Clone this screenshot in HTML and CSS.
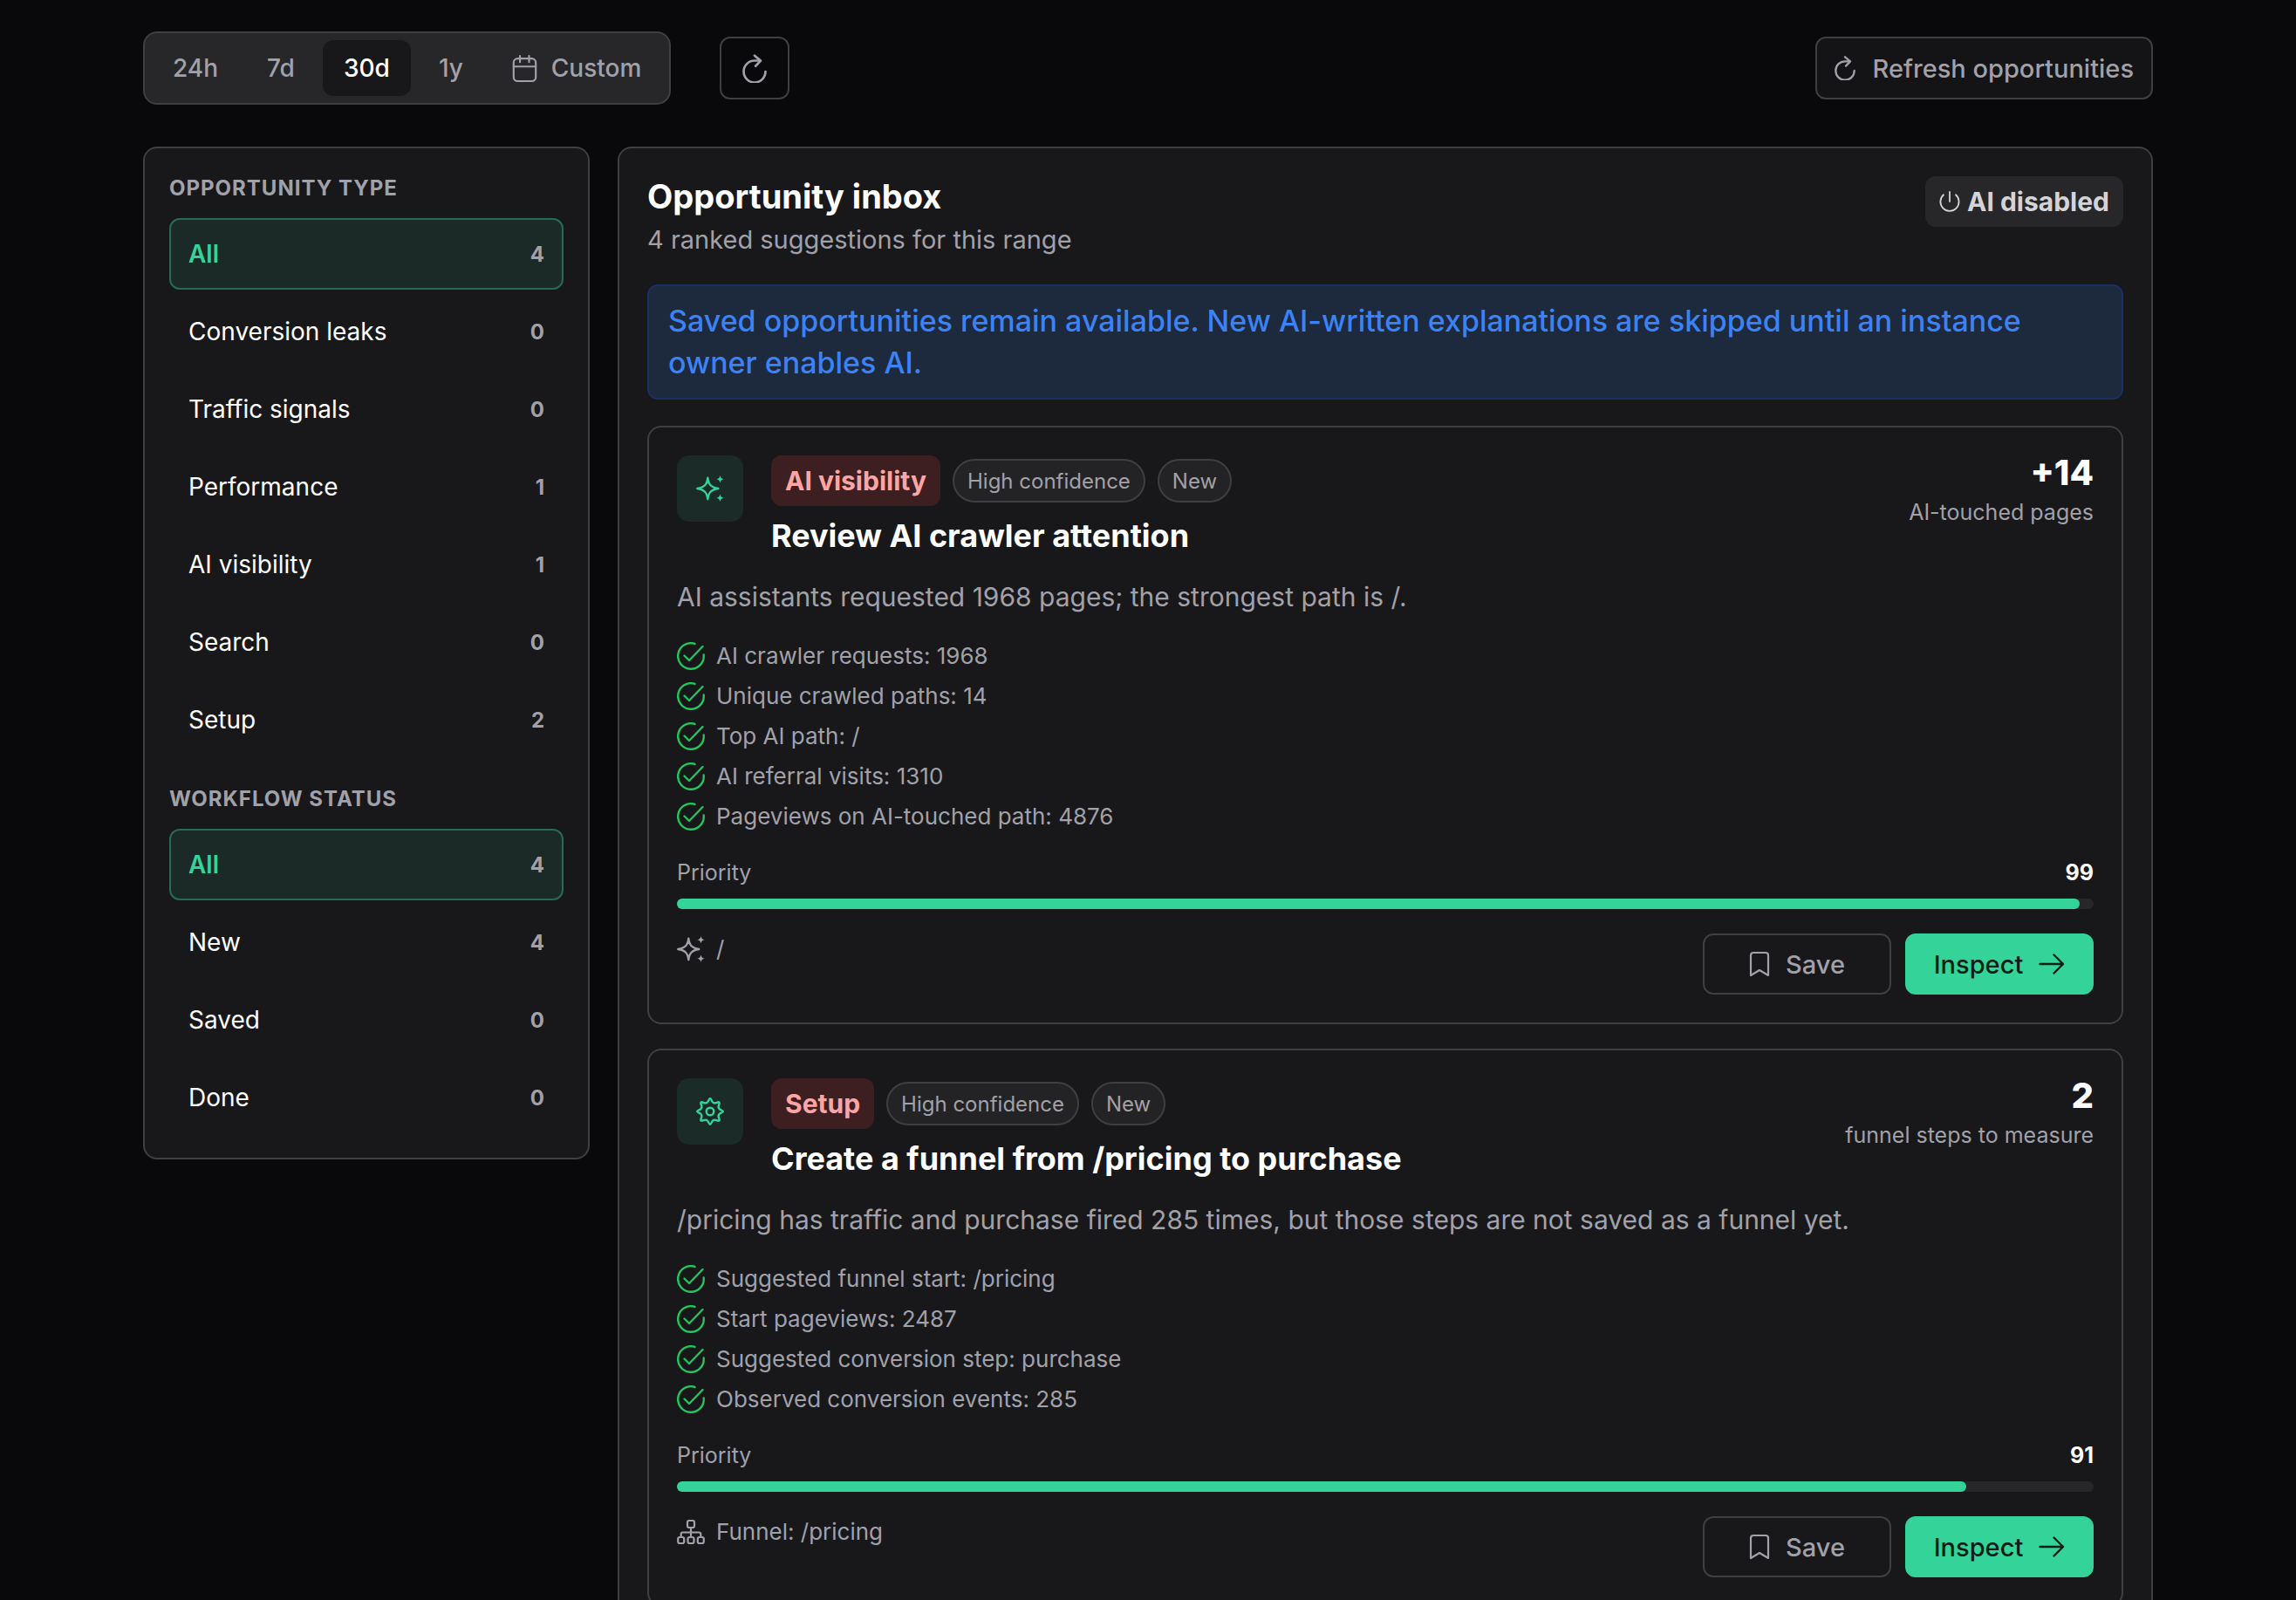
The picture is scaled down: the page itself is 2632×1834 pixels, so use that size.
FILE: index.html
```html
<!DOCTYPE html>
<html lang="en">
<head>
    <meta charset="UTF-8">
    <meta name="viewport" content="width=device-width, initial-scale=1.0">
    <title>Opportunities</title>
    <link rel="stylesheet" href="styles.css">
</head>
<body>
    <svg class="sprite" aria-hidden="true">
        <symbol id="icon-calendar" viewBox="0 0 32 36">
            <g fill="none" stroke="currentColor" stroke-width="2.4" stroke-linecap="round" stroke-linejoin="round">
                <rect x="2" y="5.500" width="28" height="28.500" rx="5"/>
                <path d="M2 15.500h28M10 2v8M21.500 2v8"/>
            </g>
        </symbol>
        <symbol id="icon-refresh" viewBox="0 0 24 28">
            <g fill="none" stroke="currentColor" stroke-width="2.3" stroke-linecap="round" stroke-linejoin="round">
                <path d="M22.700 17A10.700 10.700 0 1 1 12 6.300h5.500"/>
                <path d="M12 1.300L18 6.400l-5 5.200"/>
            </g>
        </symbol>
        <symbol id="icon-power" viewBox="0 0 24 24">
            <g fill="none" stroke="currentColor" stroke-width="1.8" stroke-linecap="round">
                <path d="M12 1v11"/>
                <path d="M5 4.3a10.6 10.6 0 1 0 14 0"/>
            </g>
        </symbol>
        <symbol id="icon-sparkles" viewBox="0 0 32 32">
            <path fill="none" stroke="currentColor" stroke-width="2.4" stroke-linejoin="round" d="M13.300 3.800c1 7.700 3.700 10.800 12 12.200-8.300 1.400-11 4.500-12 12.200-1-7.700-3.700-10.800-12-12.200 8.300-1.400 11-4.500 12-12.200z"/>
            <path fill="currentColor" d="M27.500 1c.6 2.700 1.600 3.700 4.300 4.300-2.700.6-3.700 1.600-4.300 4.300-.6-2.700-1.600-3.700-4.300-4.300 2.700-.6 3.700-1.600 4.300-4.300zM27.500 22.400c.6 2.700 1.600 3.700 4.300 4.300-2.700.6-3.700 1.600-4.300 4.300-.6-2.700-1.600-3.700-4.300-4.300 2.700-.6 3.700-1.600 4.300-4.300z"/>
        </symbol>
        <symbol id="icon-check" viewBox="0 0 32 32">
            <g fill="none" stroke="currentColor" stroke-width="2.400" stroke-linecap="round" stroke-linejoin="round">
                <path d="M30.700 14.500A14.800 14.800 0 1 1 20.500 1.900"/>
                <path d="M8.500 15.500l5.500 5.500L29.500 5"/>
            </g>
        </symbol>
        <symbol id="icon-gear" viewBox="0 0 32 32">
            <g fill="none" stroke="currentColor" stroke-width="2.400">
                <circle cx="16" cy="16" r="4.300"/>
                <path d="M28.660 17.720Q24.310 19.440 26.170 23.730T23.730 26.170T17.720 28.660T14.280 28.660T8.270 26.170T5.830 23.730T3.340 17.720T3.340 14.280T5.830 8.270T8.270 5.830T14.280 3.340T17.720 3.340T23.730 5.830T26.170 8.270T28.660 14.280T28.660 17.720z"/>
            </g>
        </symbol>
        <symbol id="icon-diagram" viewBox="0 0 32 32">
            <g fill="none" stroke="currentColor" stroke-width="2.2">
                <rect x="12" y="3" width="8" height="8" rx="2"/>
                <rect x="1.200" y="22" width="7" height="7" rx="2"/>
                <rect x="12.500" y="22" width="7" height="7" rx="2"/>
                <rect x="23.800" y="22" width="7" height="7" rx="2"/>
                <path d="M16 11v11M4.700 22v-3.500a2 2 0 0 1 2-2h18.600a2 2 0 0 1 2 2V22"/>
            </g>
        </symbol>
        <symbol id="icon-bookmark" viewBox="0 0 24 30">
            <path fill="none" stroke="currentColor" stroke-width="2.200" stroke-linejoin="round" d="M2 28V5a3 3 0 0 1 3-3h14a3 3 0 0 1 3 3v23l-10-6z"/>
        </symbol>
        <symbol id="icon-arrow" viewBox="0 0 30 26">
            <path fill="none" stroke="currentColor" stroke-width="2.400" stroke-linecap="round" stroke-linejoin="round" d="M1.500 13h26M17.500 2.500L28 13 17.500 23.500"/>
        </symbol>
    </svg>

    <div class="page">
        <header class="toolbar">
            <div class="range" role="group" aria-label="Date range">
                <button class="range-button">24h</button>
                <button class="range-button">7d</button>
                <button class="range-button active">30d</button>
                <button class="range-button">1y</button>
                <button class="range-button"><svg class="icon-calendar"><use href="#icon-calendar"/></svg>Custom</button>
            </div>
            <button class="reload-button" aria-label="Reload"><svg class="icon-reload"><use href="#icon-refresh"/></svg></button>
            <button class="refresh-button"><svg class="icon-refresh"><use href="#icon-refresh"/></svg>Refresh opportunities</button>
        </header>

        <div class="layout">
            <aside class="panel sidebar">
                <section class="filter">
                    <h2 class="filter-title">Opportunity type</h2>
                    <button class="filter-item active"><span>All</span><span class="count">4</span></button>
                    <button class="filter-item"><span>Conversion leaks</span><span class="count">0</span></button>
                    <button class="filter-item"><span>Traffic signals</span><span class="count">0</span></button>
                    <button class="filter-item"><span>Performance</span><span class="count">1</span></button>
                    <button class="filter-item"><span>AI visibility</span><span class="count">1</span></button>
                    <button class="filter-item"><span>Search</span><span class="count">0</span></button>
                    <button class="filter-item"><span>Setup</span><span class="count">2</span></button>
                </section>
                <section class="filter">
                    <h2 class="filter-title">Workflow status</h2>
                    <button class="filter-item active"><span>All</span><span class="count">4</span></button>
                    <button class="filter-item"><span>New</span><span class="count">4</span></button>
                    <button class="filter-item"><span>Saved</span><span class="count">0</span></button>
                    <button class="filter-item"><span>Done</span><span class="count">0</span></button>
                </section>
            </aside>

            <main class="panel inbox">
                <div class="inbox-header">
                    <div>
                        <h1 class="inbox-title">Opportunity inbox</h1>
                        <p class="inbox-subtitle">4 ranked suggestions for this range</p>
                    </div>
                    <span class="badge badge-muted"><svg class="icon-power"><use href="#icon-power"/></svg>AI disabled</span>
                </div>

                <div class="notice">Saved opportunities remain available. New AI-written explanations are skipped until an instance owner enables AI.</div>

                <article class="card">
                    <div class="card-header">
                        <div class="card-icon"><svg class="icon-type"><use href="#icon-sparkles"/></svg></div>
                        <div class="card-heading">
                            <div class="tags">
                                <span class="badge badge-danger">AI visibility</span>
                                <span class="chip">High confidence</span>
                                <span class="chip">New</span>
                            </div>
                            <h3 class="card-title">Review AI crawler attention</h3>
                        </div>
                        <div class="metric">
                            <strong class="metric-value">+14</strong>
                            <span class="metric-label">AI-touched pages</span>
                        </div>
                    </div>
                    <p class="card-text">AI assistants requested 1968 pages; the strongest path is /.</p>
                    <ul class="evidence">
                        <li><svg class="icon-check"><use href="#icon-check"/></svg>AI crawler requests: 1968</li>
                        <li><svg class="icon-check"><use href="#icon-check"/></svg>Unique crawled paths: 14</li>
                        <li><svg class="icon-check"><use href="#icon-check"/></svg>Top AI path: /</li>
                        <li><svg class="icon-check"><use href="#icon-check"/></svg>AI referral visits: 1310</li>
                        <li><svg class="icon-check"><use href="#icon-check"/></svg>Pageviews on AI-touched path: 4876</li>
                    </ul>
                    <div class="priority"><span>Priority</span><strong>99</strong></div>
                    <div class="bar"><div class="bar-fill" style="width: 99%"></div></div>
                    <div class="card-footer">
                        <span class="source"><svg class="icon-source"><use href="#icon-sparkles"/></svg>/</span>
                        <div class="actions">
                            <button class="button"><svg class="icon-bookmark"><use href="#icon-bookmark"/></svg>Save</button>
                            <button class="button button-primary">Inspect<svg class="icon-arrow"><use href="#icon-arrow"/></svg></button>
                        </div>
                    </div>
                </article>

                <article class="card">
                    <div class="card-header">
                        <div class="card-icon"><svg class="icon-type"><use href="#icon-gear"/></svg></div>
                        <div class="card-heading">
                            <div class="tags">
                                <span class="badge badge-danger">Setup</span>
                                <span class="chip">High confidence</span>
                                <span class="chip">New</span>
                            </div>
                            <h3 class="card-title">Create a funnel from /pricing to purchase</h3>
                        </div>
                        <div class="metric">
                            <strong class="metric-value">2</strong>
                            <span class="metric-label">funnel steps to measure</span>
                        </div>
                    </div>
                    <p class="card-text">/pricing has traffic and purchase fired 285 times, but those steps are not saved as a funnel yet.</p>
                    <ul class="evidence">
                        <li><svg class="icon-check"><use href="#icon-check"/></svg>Suggested funnel start: /pricing</li>
                        <li><svg class="icon-check"><use href="#icon-check"/></svg>Start pageviews: 2487</li>
                        <li><svg class="icon-check"><use href="#icon-check"/></svg>Suggested conversion step: purchase</li>
                        <li><svg class="icon-check"><use href="#icon-check"/></svg>Observed conversion events: 285</li>
                    </ul>
                    <div class="priority"><span>Priority</span><strong>91</strong></div>
                    <div class="bar"><div class="bar-fill" style="width: 91%"></div></div>
                    <div class="card-footer">
                        <span class="source"><svg class="icon-source"><use href="#icon-diagram"/></svg>Funnel: /pricing</span>
                        <div class="actions">
                            <button class="button"><svg class="icon-bookmark"><use href="#icon-bookmark"/></svg>Save</button>
                            <button class="button button-primary">Inspect<svg class="icon-arrow"><use href="#icon-arrow"/></svg></button>
                        </div>
                    </div>
                </article>
            </main>
        </div>
    </div>
</body>
</html>
```
FILE: styles.css
```css
* {
    box-sizing: border-box;
    margin: 0;
    padding: 0;
}

body {
    height: 100vh;
    overflow: hidden;
    background-color: #09090b;
    color: #ffffff;
    font-family: Inter, sans-serif;
    font-size: 28px;
}

button {
    font: inherit;
    cursor: pointer;
}

svg {
    flex: none;
}

.sprite {
    display: none;
}

.page {
    max-width: 2304px;
    margin: 0 auto;
    padding-top: 36px;
}

/* Toolbar */

.toolbar {
    display: flex;
    align-items: center;
    margin-bottom: 48px;
}

.range {
    display: flex;
    gap: 8px;
    padding: 8px;
    border: 2px solid #3f3f42;
    border-radius: 16px;
    background-color: #27272a;
}

.range-button {
    display: flex;
    align-items: center;
    gap: 16px;
    height: 64px;
    padding: 0 24px;
    border: none;
    border-radius: 12px;
    background: none;
    color: #a1a1aa;
    font-weight: 500;
}

.range-button.active {
    background-color: #18181b;
    color: #ffffff;
}

.reload-button,
.refresh-button {
    display: flex;
    align-items: center;
    justify-content: center;
    height: 72px;
    border: 2px solid #3f3f42;
    border-radius: 12px;
    background: none;
    color: #a1a1aa;
}

.reload-button {
    width: 80px;
    margin-left: 56px;
}

.refresh-button {
    gap: 20px;
    margin-left: auto;
    padding: 0 20px;
    background-color: #141416;
    font-size: 29px;
    font-weight: 500;
}

.icon-calendar {
    width: 29px;
    height: 33px;
}

.icon-reload {
    width: 28px;
    height: 33px;
}

.icon-refresh {
    width: 24px;
    height: 28px;
}

.layout {
    display: grid;
    grid-template-columns: 512px 1fr;
    align-items: start;
    gap: 32px;
}

.panel {
    border: 2px solid #3f3f42;
    border-radius: 16px;
    background-color: #18181b;
}

/* Sidebar */

.sidebar {
    display: flex;
    flex-direction: column;
    gap: 32px;
    padding: 28px;
}

.filter {
    display: flex;
    flex-direction: column;
    gap: 7px;
}

.filter-title {
    margin-bottom: 9px;
    color: #a1a1aa;
    font-size: 24px;
    font-weight: 700;
    line-height: 36px;
    letter-spacing: 1px;
    text-transform: uppercase;
}

.filter-item {
    display: flex;
    align-items: center;
    justify-content: space-between;
    height: 82px;
    padding: 0 20px;
    border: 2px solid transparent;
    border-radius: 12px;
    background: none;
    color: #ffffff;
}

.filter-item.active {
    border-color: #276a55;
    background-color: #1c2a27;
    color: #34d399;
    font-weight: 600;
}

.count {
    color: #a1a1aa;
    font-size: 24px;
    font-weight: 700;
}

/* Inbox */

.inbox {
    padding: 32px;
}

.inbox-header {
    display: flex;
    align-items: flex-start;
    justify-content: space-between;
    margin-bottom: 32px;
}

.inbox-title {
    margin-bottom: 8px;
    font-size: 38px;
    font-weight: 700;
    line-height: 46px;
}

.inbox-subtitle {
    color: #a1a1aa;
    font-size: 29px;
    line-height: 38px;
}

.badge {
    display: flex;
    align-items: center;
    height: 58px;
    padding: 0 16px;
    border-radius: 12px;
    font-size: 30px;
    font-weight: 700;
}

.badge-muted {
    gap: 8px;
    background-color: #27272a;
    color: #d4d4d8;
}

.badge-danger {
    background-color: #3d1f22;
    color: #fca5a5;
}

.icon-power {
    width: 24px;
    height: 24px;
}

.notice {
    margin-bottom: 30px;
    padding: 16px 22px;
    border: 2px solid #1c2f63;
    border-radius: 12px;
    background-color: #1d293d;
    color: #3b82f6;
    font-size: 34px;
    font-weight: 500;
    line-height: 48px;
}

/* Opportunity card */

.card {
    padding: 32px;
    border: 2px solid #3f3f42;
    border-radius: 16px;
}

.card + .card {
    margin-top: 28px;
}

.card-header {
    display: flex;
    align-items: flex-start;
    gap: 32px;
}

.card-icon {
    display: flex;
    align-items: center;
    justify-content: center;
    width: 76px;
    height: 76px;
    border-radius: 14px;
    background-color: #1b2b27;
    color: #34d399;
}

.icon-type,
.icon-check,
.icon-source {
    width: 32px;
    height: 32px;
}

.card-heading {
    flex: 1;
}

.tags {
    display: flex;
    align-items: center;
    gap: 14px;
}

.chip {
    display: flex;
    align-items: center;
    height: 50px;
    padding: 0 15px;
    border: 2px solid #3f3f42;
    border-radius: 25px;
    background-color: #232326;
    color: #a1a1aa;
    font-size: 24px;
}

.card-title {
    margin-top: 12px;
    font-size: 36px;
    font-weight: 700;
    line-height: 44px;
}

.metric {
    display: flex;
    flex-direction: column;
    align-items: flex-end;
}

.metric-value {
    font-size: 40px;
    font-weight: 800;
    line-height: 40px;
}

.metric-label {
    margin-top: 8px;
    color: #a1a1aa;
    font-size: 25px;
    line-height: 34px;
}

.card-text {
    margin-top: 26px;
    color: #a1a1aa;
    font-size: 30px;
    line-height: 44px;
}

.evidence {
    display: flex;
    flex-direction: column;
    gap: 14px;
    margin: 30px 0 32px;
    list-style: none;
}

.evidence li,
.source {
    display: flex;
    align-items: center;
    gap: 13px;
    color: #a1a1aa;
    font-size: 26px;
    line-height: 32px;
}

.source {
    line-height: 36px;
}

.icon-check {
    color: #22c55e;
}

.priority {
    display: flex;
    justify-content: space-between;
    margin-bottom: 14px;
    color: #a1a1aa;
    font-size: 25px;
    line-height: 32px;
}

.priority strong {
    color: #ffffff;
}

.bar {
    height: 12px;
    border-radius: 6px;
    background-color: #27272a;
}

.bar-fill {
    height: 100%;
    border-radius: 6px;
    background-color: #34d399;
}

.card-footer {
    display: flex;
    align-items: flex-start;
    justify-content: space-between;
    margin-top: 28px;
}

.actions {
    display: grid;
    grid-template-columns: 216px 216px;
    gap: 16px;
}

.button {
    display: flex;
    align-items: center;
    justify-content: center;
    gap: 18px;
    height: 70px;
    border: 2px solid #3f3f42;
    border-radius: 12px;
    background: none;
    color: #a1a1aa;
    font-size: 29px;
    font-weight: 500;
}

.button-primary {
    border-color: #34d399;
    background-color: #34d399;
    color: #0c1f17;
}

.icon-bookmark {
    width: 24px;
    height: 30px;
}

.icon-arrow {
    width: 30px;
    height: 26px;
}
```
